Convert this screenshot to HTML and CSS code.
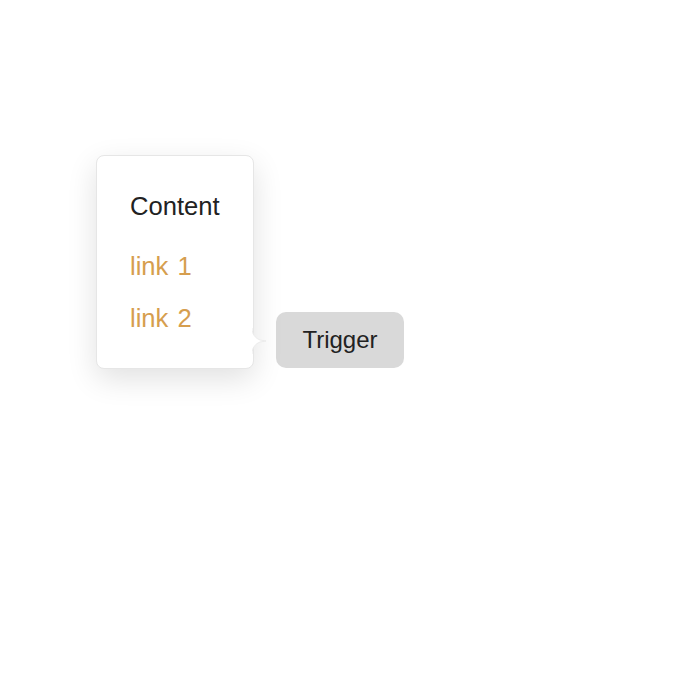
FILE: index.html
```html
<!DOCTYPE html>
<html>
<head>
<meta charset="utf-8">
<link rel="stylesheet" href="styles.css">
</head>
<body>
<div class="stage">
  <div class="popover">
    <div class="title">Content</div>
    <a class="link" href="#">link 1</a>
    <a class="link" href="#">link 2</a>
    <svg class="arrow" width="16" height="26" viewBox="0 0 16 26">
      <path d="M0 0 C0 6 3 10 8 12 L14 13 L8 14 C3 16 0 20 0 26 Z" fill="#fff"/>
      <path d="M0 0 C0 6 3 10 8 12 L14 13 L8 14 C3 16 0 20 0 26" fill="none" stroke="#ececec" stroke-width="1"/>
    </svg>
  </div>
  <button class="trigger">Trigger</button>
</div>
</body>
</html>
```
FILE: styles.css
```css
html, body {
  margin: 0;
  padding: 0;
  background: #fff;
  font-family: "Liberation Sans", Arial, sans-serif;
}
.stage {
  box-sizing: border-box;
  min-height: 680px;
  display: flex;
  align-items: flex-start;
  gap: 22px;
  padding: 155px 0 0 96px;
}
.popover {
  position: relative;
  box-sizing: border-box;
  width: 158px;
  height: 214px;
  padding: 35px 20px 0 33px;
  border: 1px solid #e6e6e6;
  border-radius: 8px;
  background: #fff;
  box-shadow: 0 10px 30px rgba(0, 0, 0, 0.12);
  display: flex;
  flex-direction: column;
}
.title {
  font-size: 25.6px;
  line-height: 30px;
  color: #222;
  margin-bottom: 30px;
}
.link {
  font-size: 25.6px;
  line-height: 30px;
  color: #d69e4e;
  text-decoration: none;
  word-spacing: 2px;
  margin-bottom: 22px;
}
.arrow {
  position: absolute;
  right: -15px;
  top: 172px;
}
.trigger {
  margin-top: 157px;
  width: 128px;
  height: 56px;
  border: none;
  border-radius: 10px;
  background: #d9d9d9;
  color: #222;
  font-family: "Liberation Sans", Arial, sans-serif;
  font-size: 24px;
  padding: 0;
}
```
